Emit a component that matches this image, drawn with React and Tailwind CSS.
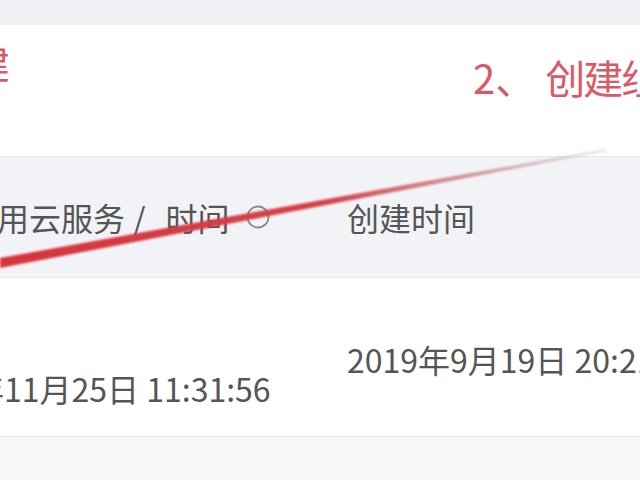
import React from 'react';

const font = { fontFamily: '"Noto Sans CJK SC", "Noto Sans", sans-serif' };

function HelpIcon() {
  return (
    <svg width="24" height="24" viewBox="0 0 24 24" className="shrink-0">
      <circle cx="12" cy="12" r="10.5" fill="none" stroke="#8a8a8a" strokeWidth="1.8" />
    </svg>
  );
}

function Arrow() {
  return (
    <svg className="absolute inset-0 pointer-events-none" width="640" height="480" viewBox="0 0 640 480">
      <defs>
        <linearGradient id="stroke" x1="0" y1="0" x2="1" y2="0">
          <stop offset="0" stopColor="#d7343c" />
          <stop offset="0.55" stopColor="#d4434b" />
          <stop offset="0.8" stopColor="#c98a92" stopOpacity="0.8" />
          <stop offset="1" stopColor="#d9c8cc" stopOpacity="0.5" />
        </linearGradient>
        <filter id="soft">
          <feGaussianBlur stdDeviation="0.8" />
        </filter>
      </defs>
      <polygon points="0,258 605,149 607,151 0,268" fill="url(#stroke)" filter="url(#soft)" />
    </svg>
  );
}

export default function App() {
  return (
    <div className="relative w-[640px] h-[480px] overflow-hidden bg-white flex flex-col" style={font}>
      {/* top band */}
      <div className="h-[25px] bg-[#eef0f3] shrink-0" />

      {/* annotations */}
      <div className="h-[131px] shrink-0 flex text-[40px] leading-none text-[#d95a66] whitespace-nowrap">
        <span className="-ml-[30px] mt-[17px]">建</span>
        <span className="ml-auto w-[167px] mt-[32px] flex">
          <span>2、</span>
          <span className="ml-[10px] tracking-[-2px]">创建组</span>
        </span>
      </div>

      {/* table header */}
      <div className="h-[122px] shrink-0 bg-[#f2f3f6] border-t border-b border-[#e6e8eb] flex items-center text-[32px] text-[#555] whitespace-nowrap">
        <div className="w-[446px] shrink-0 -ml-[99px] flex items-center">
          <span>最近使用云服务</span>
          <span className="ml-[8px] mr-[20px]">/</span>
          <span>时间</span>
          <span className="ml-[16px] flex"><HelpIcon /></span>
        </div>
        <div>创建时间</div>
      </div>

      {/* row */}
      <div className="h-[159px] shrink-0 border-b border-[#e6e8eb] flex text-[32px] text-[#555] whitespace-nowrap">
        <div className="w-[446px] shrink-0 -ml-[99px] pt-[86px]">2019年11月25日 11:31:56</div>
        <div className="pt-[57px]">2019年9月19日 20:21:08</div>
      </div>

      <div className="flex-1 bg-[#f7f8fa]" />

      <Arrow />
    </div>
  );
}
